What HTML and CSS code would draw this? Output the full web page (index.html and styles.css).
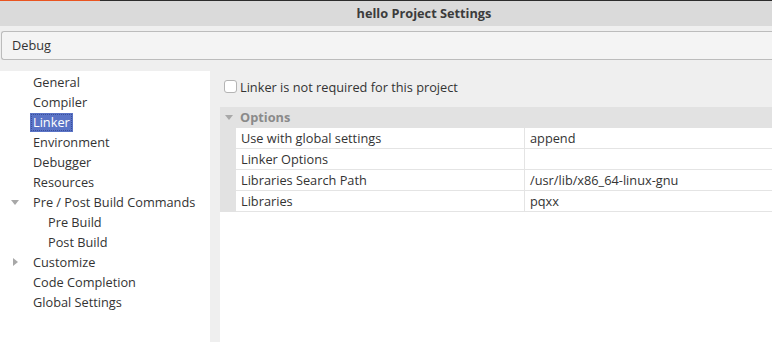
FILE: index.html
```html
<!DOCTYPE html>
<html lang="en">
<head>
    <meta charset="UTF-8">
    <title>hello Project Settings</title>
    <link rel="stylesheet" href="styles.css">
</head>
<body>
    <div class="topline"><span class="accent"></span></div>
    <header class="titlebar">hello Project Settings</header>
    <div class="combo-row">
        <div class="combo">Debug</div>
    </div>
    <main class="main">
        <ul class="tree">
            <li>General</li>
            <li>Compiler</li>
            <li><span class="selected">Linker</span></li>
            <li>Environment</li>
            <li>Debugger</li>
            <li>Resources</li>
            <li><span class="arrow down"></span>Pre / Post Build Commands</li>
            <li class="child">Pre Build</li>
            <li class="child">Post Build</li>
            <li><span class="arrow right"></span>Customize</li>
            <li>Code Completion</li>
            <li>Global Settings</li>
        </ul>
        <section class="page">
            <label class="check"><span class="box"></span>Linker is not required for this project</label>
            <div class="grid">
                <div class="group"><span class="arrow down"></span>Options</div>
                <div class="row"><div class="name">Use with global settings</div><div class="value">append</div></div>
                <div class="row"><div class="name">Linker Options</div><div class="value"></div></div>
                <div class="row"><div class="name">Libraries Search Path</div><div class="value">/usr/lib/x86_64-linux-gnu</div></div>
                <div class="row"><div class="name">Libraries</div><div class="value">pqxx</div></div>
            </div>
        </section>
    </main>
</body>
</html>
```

FILE: styles.css
```css
* { margin: 0; padding: 0; box-sizing: border-box; }
html, body { height: 100%; overflow: hidden; }
body { font-family: 'Open Sans', 'Noto Sans', sans-serif; font-size: 12.75px; color: #333; background: #efefef; display: flex; flex-direction: column; }
.topline { height: 1px; background: #2c2c2c; display: flex; }
.topline .accent { width: 100px; background: #e95420; }
.titlebar { height: 25px; background: #dadada; color: #3c3c3c; font-weight: bold; text-align: center; line-height: 25px; padding-left: 76px; font-size: 12.75px; }
.combo-row { padding: 5px 0 9px 1px; }
.combo { height: 29px; line-height: 27px; background: #f4f4f4; border: 1px solid #bcbcbc; border-right: none; border-radius: 3px 0 0 3px; padding-left: 10px; color: #333; }
.main { flex: 1; display: flex; gap: 10px; padding-top: 2px; }
.tree { width: 210px; background: #fff; list-style: none; padding-top: 1px; }
.tree li { height: 20px; line-height: 20px; padding-left: 33px; position: relative; white-space: nowrap; }
.tree li.child { padding-left: 48px; }
.tree .selected { display: inline-block; background: #5a73c6; color: #fff; outline: 1px dotted #3a4f9a; outline-offset: -2px; padding: 0 3px; margin-left: -3px; line-height: 19px; }
.arrow { position: absolute; width: 0; height: 0; }
.arrow.down { border-left: 4px solid transparent; border-right: 4px solid transparent; border-top: 5px solid #a8a8a8; }
.arrow.right { border-top: 4px solid transparent; border-bottom: 4px solid transparent; border-left: 5px solid #a8a8a8; }
.tree .arrow.down { left: 11px; top: 8px; }
.tree .arrow.right { left: 13px; top: 6px; }
.page { flex: 1; display: flex; flex-direction: column; }
.check { display: flex; align-items: center; height: 36px; padding-left: 4px; padding-bottom: 5px; }
.box { width: 13px; height: 13px; background: #fff; border: 1px solid #b4b4b4; border-radius: 3px; margin-right: 3px; }
.grid { flex: 1; background: #fff; }
.group { height: 21px; line-height: 21px; background: #e2e2e2; color: #8a8a8a; font-weight: bold; padding-left: 20px; position: relative; }
.group .arrow.down { left: 5px; top: 8px; }
.row { display: flex; height: 21px; line-height: 20px; border-left: 16px solid #e2e2e2; }
.row .name, .row .value { border-bottom: 1px solid #e4e4e4; padding-left: 5px; white-space: nowrap; }
.row .name { width: 289px; border-right: 1px solid #e4e4e4; }
.row .value { flex: 1; }
```
